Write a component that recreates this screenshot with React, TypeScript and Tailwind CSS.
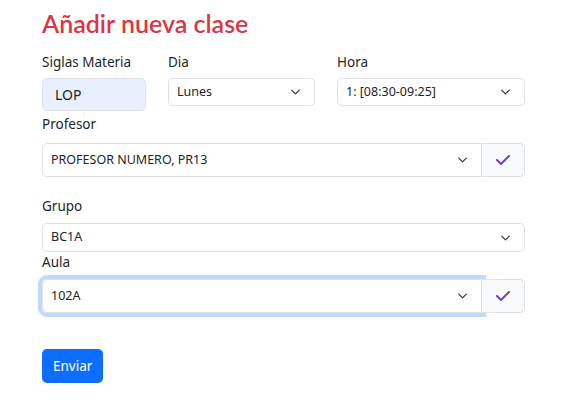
function Chevron() {
  return (
    <svg viewBox="0 0 16 16" className="w-[13px] h-[10px] shrink-0" fill="none">
      <path d="m2 5 6 6 6-6" stroke="#343a40" strokeWidth="2" strokeLinecap="round" strokeLinejoin="round" />
    </svg>
  );
}

function Check() {
  return (
    <svg viewBox="0 0 448 512" className="w-[16px] h-[16px]">
      <path
        fill="#6f42c1"
        d="M438.6 105.4c12.5 12.5 12.5 32.8 0 45.3l-256 256c-12.5 12.5-32.8 12.5-45.3 0l-128-128c-12.5-12.5-12.5-32.8 0-45.3s32.8-12.5 45.3 0L160 338.7 393.4 105.4c12.5-12.5 32.8-12.5 45.3 0z"
      />
    </svg>
  );
}

interface SelectProps {
  value: string;
  className?: string;
  rounded?: string;
}

function FakeSelect({ value, className = "", rounded = "rounded-[5px]" }: SelectProps) {
  return (
    <div
      className={`flex items-center justify-between bg-white border border-[#dee2e6] pl-[8px] pr-[12px] text-[12.5px] text-[#212529] ${rounded} ${className}`}
    >
      <span>{value}</span>
      <Chevron />
    </div>
  );
}

function CheckButton({ className = "" }: { className?: string }) {
  return (
    <div
      className={`w-[43px] flex items-center justify-center bg-[#f8f9fa] border border-[#dee2e6] border-l-0 rounded-r-[5px] ${className}`}
    >
      <Check />
    </div>
  );
}

export default function App() {
  return (
    <div
      className="w-[574px] h-[408px] bg-white pl-[42px] pr-[49px] text-[#212529]"
      style={{ fontFamily: '"Noto Sans", "Open Sans", sans-serif' }}
    >
      <h2
        className="pt-[6px] text-[25px] leading-[34px] font-semibold text-[#dc3545]"
        style={{ fontFamily: 'Lato, "Noto Sans", sans-serif' }}
      >
        Añadir nueva clase
      </h2>

      <div className="mt-[12px] grid grid-cols-[104px_147px_188px] gap-x-[22px]">
        <div>
          <div className="text-[13.5px] leading-[20px]">Siglas Materia</div>
          <div className="mt-[6px] h-[33px] flex items-center pl-[12px] bg-[#e8f0fe] border border-[#dee2e6] rounded-[5px] text-[14px]">
            LOP
          </div>
        </div>
        <div>
          <div className="text-[13.5px] leading-[20px]">Dia</div>
          <FakeSelect value="Lunes" className="mt-[6px] h-[28px]" />
        </div>
        <div>
          <div className="text-[13.5px] leading-[20px]">Hora</div>
          <FakeSelect value="1: [08:30-09:25]" className="mt-[6px] h-[28px]" />
        </div>
      </div>

      <div className="mt-[3px] text-[13.5px] leading-[20px]">Profesor</div>
      <div className="mt-[9px] flex h-[34px]">
        <FakeSelect value="PROFESOR NUMERO, PR13" className="flex-1" rounded="rounded-l-[5px]" />
        <CheckButton />
      </div>

      <div className="mt-[19px] text-[13.5px] leading-[20px]">Grupo</div>
      <FakeSelect value="BC1A" className="mt-[7px] h-[29px]" />

      <div className="text-[13.5px] leading-[20px]">Aula</div>
      <div className="mt-[7px] flex h-[34px]">
        <div className="flex-1 flex rounded-l-[5px] ring-4 ring-[#c2d8fc]">
          <FakeSelect value="102A" className="flex-1 border-[#86b7fe]" rounded="rounded-l-[5px]" />
        </div>
        <CheckButton />
      </div>

      <button className="mt-[36px] h-[34px] px-[11px] bg-[#0d6efd] text-white text-[13.5px] rounded-[5px]">
        Enviar
      </button>
    </div>
  );
}
